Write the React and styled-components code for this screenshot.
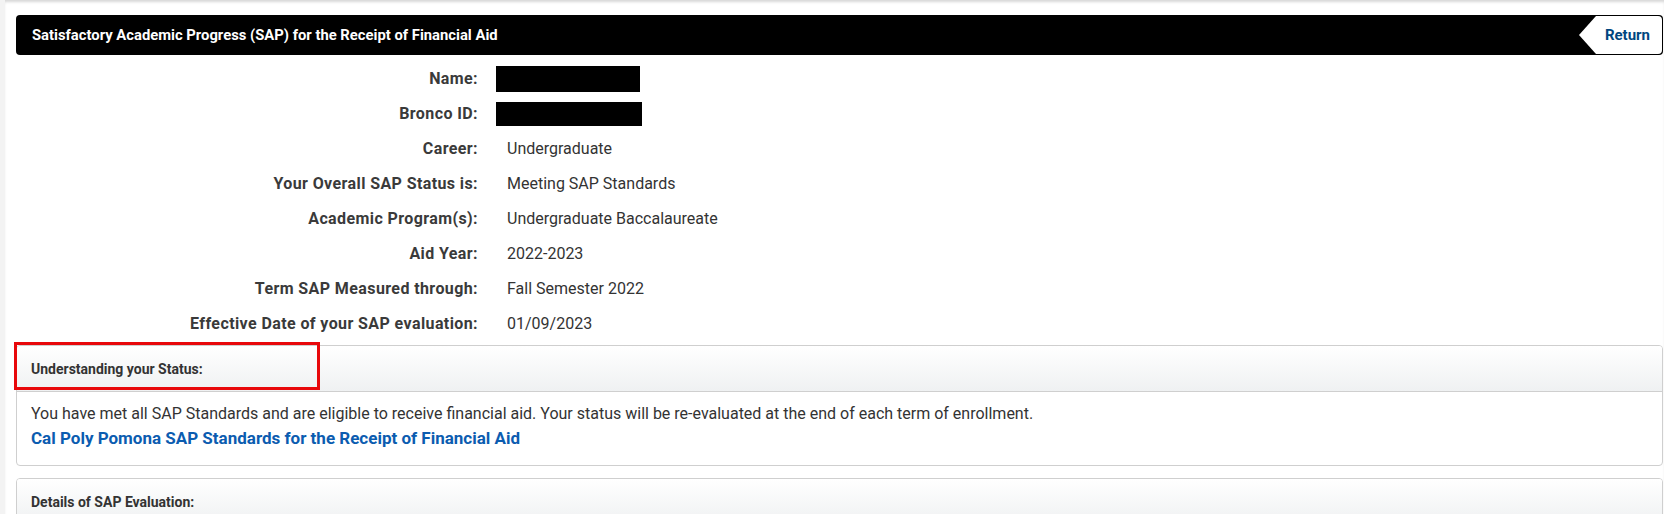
import React from "react";
import styled, { createGlobalStyle } from "styled-components";

const GlobalStyle = createGlobalStyle`
  html, body {
    margin: 0;
    padding: 0;
    background: #f3f3f3;
    font-family: Roboto, "Liberation Sans", Arial, sans-serif;
    color: #333;
  }
`;

const Page = styled.div`
  position: relative;
  margin-left: 5px;
  min-height: 514px;
  background: #fff;
  box-shadow: inset 0 3px 3px -1px rgba(0, 0, 0, 0.16);
  padding: 15px 1px 0 11px;
  box-sizing: border-box;
`;

const HeaderBar = styled.div`
  display: flex;
  align-items: center;
  justify-content: space-between;
  height: 40px;
  background: #000;
  border-radius: 4px;
  padding-left: 16px;
`;

const Title = styled.h1`
  margin: 0;
  font-size: 14.8px;
  font-weight: 700;
  color: #fff;
`;

const ReturnButton = styled.a`
  display: flex;
  align-items: center;
  justify-content: flex-end;
  width: 83px;
  height: 38px;
  margin-right: 1px;
  padding-right: 12px;
  box-sizing: border-box;
  background: #fff;
  border-radius: 0 4px 4px 0;
  clip-path: polygon(0 50%, 17px 0, 100% 0, 100% 100%, 17px 100%);
  font-size: 15px;
  font-weight: 700;
  color: #00467f;
  text-decoration: none;
`;

const InfoGrid = styled.div`
  display: grid;
  grid-template-columns: 462px 1fr;
  grid-auto-rows: 35px;
  column-gap: 29px;
  margin-top: 6px;
  align-items: center;
`;

const Label = styled.div`
  text-align: right;
  font-size: 16px;
  letter-spacing: 0.4px;
  font-weight: 700;
  color: #3a3a3a;
`;

const Value = styled.div`
  font-size: 16px;
  color: #333;
`;

const Redacted = styled.div`
  width: ${(p) => p.$w}px;
  height: ${(p) => p.$h}px;
  margin-left: -11px;
  background: #000;
`;

const Panel = styled.section`
  border: 1px solid #cfcfcf;
  border-radius: 4px;
  margin-top: ${(p) => p.$mt}px;
  overflow: hidden;
`;

const PanelHeader = styled.div`
  height: 45px;
  display: flex;
  align-items: center;
  padding-left: 14px;
  background: linear-gradient(#fff, #eff1f2);
  border-bottom: 1px solid #cfcfcf;
  font-size: 14px;
  font-weight: 700;
  color: #333;
`;

const PanelBody = styled.div`
  padding: 9px 14px 14px;
  font-size: 16px;
  line-height: 25px;
  color: #333;
`;

const Link = styled.a`
  display: block;
  font-size: 17px;
  font-weight: 700;
  color: #0b5cb0;
  text-decoration: none;
`;

const Highlight = styled.div`
  position: absolute;
  left: 9px;
  top: 342px;
  width: 306px;
  height: 48px;
  border: 3px solid #e8080b;
  box-sizing: border-box;
  pointer-events: none;
`;

const rows = [
  ["Name:", null, 144, 26],
  ["Bronco ID:", null, 146, 24],
  ["Career:", "Undergraduate"],
  ["Your Overall SAP Status is:", "Meeting SAP Standards"],
  ["Academic Program(s):", "Undergraduate Baccalaureate"],
  ["Aid Year:", "2022-2023"],
  ["Term SAP Measured through:", "Fall Semester 2022"],
  ["Effective Date of your SAP evaluation:", "01/09/2023"],
];

export default function App() {
  return (
    <>
      <GlobalStyle />
      <Page>
        <HeaderBar>
          <Title>Satisfactory Academic Progress (SAP) for the Receipt of Financial Aid</Title>
          <ReturnButton href="#">Return</ReturnButton>
        </HeaderBar>

        <InfoGrid>
          {rows.map(([label, value, w, h]) => (
            <React.Fragment key={label}>
              <Label>{label}</Label>
              {value ? <Value>{value}</Value> : <Redacted $w={w} $h={h} />}
            </React.Fragment>
          ))}
        </InfoGrid>

        <Panel $mt={4}>
          <PanelHeader>Understanding your Status:</PanelHeader>
          <PanelBody>
            You have met all SAP Standards and are eligible to receive financial aid. Your status will be
            re-evaluated at the end of each term of enrollment.
            <Link href="#">Cal Poly Pomona SAP Standards for the Receipt of Financial Aid</Link>
          </PanelBody>
        </Panel>

        <Panel $mt={12}>
          <PanelHeader>Details of SAP Evaluation:</PanelHeader>
          <PanelBody />
        </Panel>

        <Highlight />
      </Page>
    </>
  );
}
